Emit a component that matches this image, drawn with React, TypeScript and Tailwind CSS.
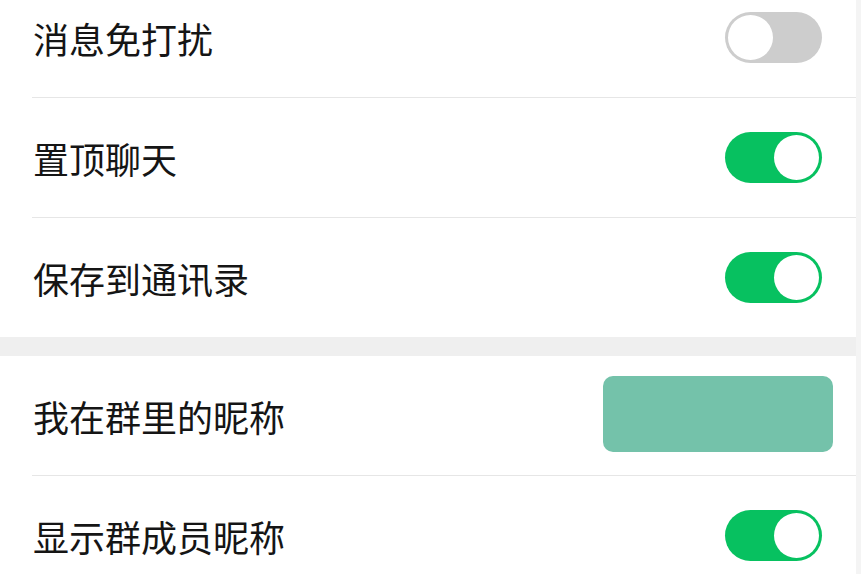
import React from 'react';

function Toggle({ on }: { on: boolean }) {
  return (
    <div
      className={`relative w-[97px] h-[51px] rounded-full shrink-0 ${
        on ? 'bg-[#07c160]' : 'bg-[#cdcdcd]'
      }`}
    >
      <div
        className={`absolute top-[3px] w-[45px] h-[45px] rounded-full bg-white ${
          on ? 'right-[3px]' : 'left-[3px]'
        }`}
      />
    </div>
  );
}

function Row({ label, children, last }: { label: string; children: React.ReactNode; last?: boolean }) {
  return (
    <>
      <div className="flex h-[119px] items-center justify-between pl-[33px] pr-[34px]">
        <span className="text-[36px] leading-none text-[#151515]">{label}</span>
        {children}
      </div>
      {!last && <div className="ml-[32px] h-px bg-[#e6e6e6]" />}
    </>
  );
}

export default function App() {
  return (
    <div
      className="flex h-[574px] w-full overflow-hidden bg-white"
      style={{ fontFamily: '"Noto Sans CJK SC", "Noto Sans", sans-serif' }}
    >
      <div className="flex-1">
        <div className="-mt-[22px]">
          <Row label="消息免打扰">
            <Toggle on={false} />
          </Row>
          <Row label="置顶聊天">
            <Toggle on />
          </Row>
          <Row label="保存到通讯录" last>
            <Toggle on />
          </Row>
        </div>
        <div className="h-[19px] bg-[#efefef]" />
        <div>
          <div className="flex h-[119px] items-center justify-between pl-[33px] pr-[23px]">
            <span className="text-[36px] leading-none text-[#151515]">我在群里的昵称</span>
            <div className="-mt-[4px] h-[76px] w-[230px] rounded-[10px] bg-[#74c2aa]" />
          </div>
          <div className="ml-[32px] h-px bg-[#e6e6e6]" />
          <Row label="显示群成员昵称" last>
            <Toggle on />
          </Row>
        </div>
      </div>
      <div className="w-[5px] bg-[#f4f4f4]" />
    </div>
  );
}
